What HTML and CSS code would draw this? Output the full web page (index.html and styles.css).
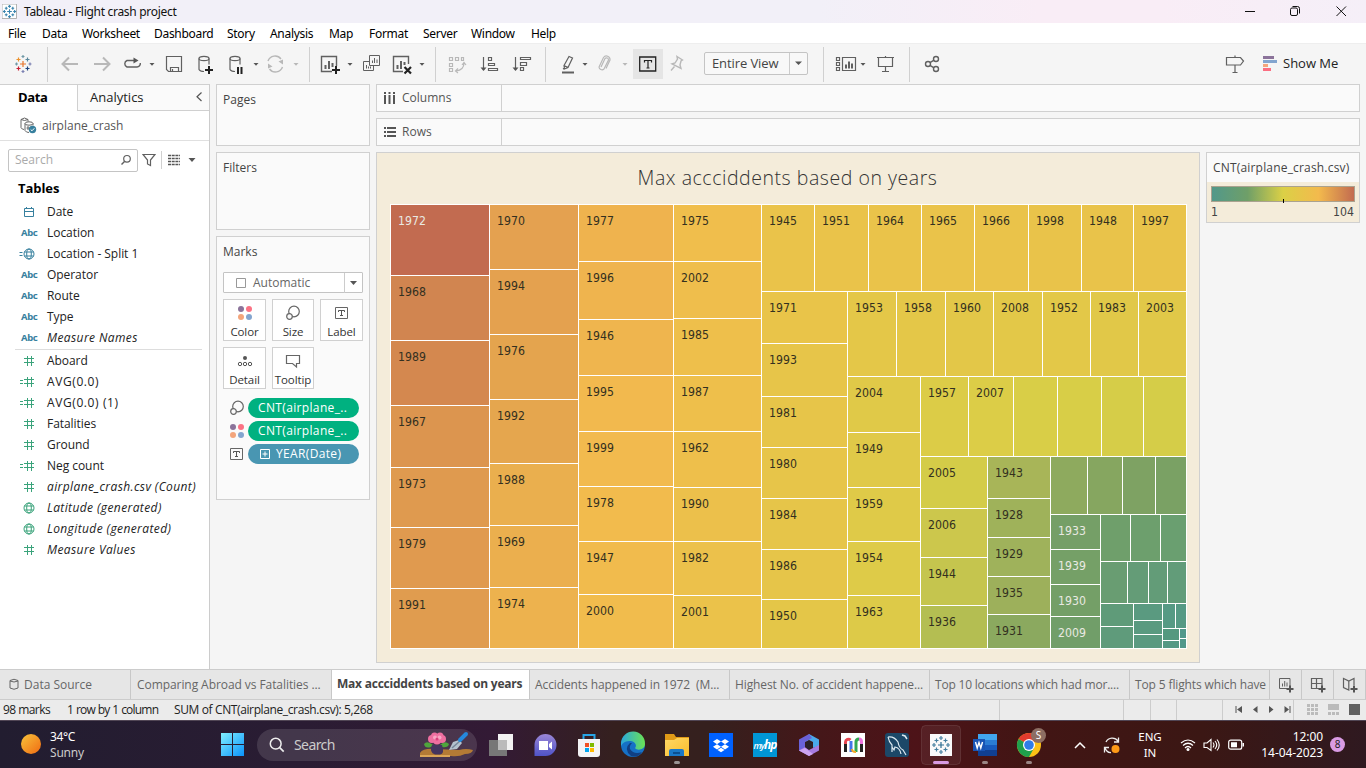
FILE: index.html
```html
<!DOCTYPE html>
<html lang="en">
<head>
<meta charset="utf-8">
<title>Tableau - Flight crash project</title>
<link rel="stylesheet" href="styles.css">
</head>
<body>
<svg width="0" height="0" class="defs">
  <defs>
    <symbol id="caret" viewBox="0 0 8 24"><path d="M1.500 11h5L4 13.800z" fill="currentColor"/></symbol>
    <symbol id="hash" viewBox="0 0 14 14"><path d="M5.500 2v10M9.500 2v10M2 4.500h10M2 8.500h10" stroke="currentColor" fill="none"/></symbol>
    <symbol id="eqhash" viewBox="0 0 18 14"><path d="M9.500 2v10M13.500 2v10M6 4.500h10M6 8.500h10M2 5.500h3M2 8.500h3" stroke="currentColor" fill="none"/></symbol>
    <symbol id="globe" viewBox="0 0 14 14"><g stroke="currentColor" fill="none"><circle cx="7" cy="7" r="5"/><ellipse cx="7" cy="7" rx="2.300" ry="5"/><path d="M2.500 5h9M2.500 9h9"/></g></symbol>
    <symbol id="dots" viewBox="0 0 16 16"><circle cx="4" cy="4" r="3" fill="#8b739a"/><circle cx="12" cy="4" r="3" fill="#fb7284"/><circle cx="4" cy="12" r="3" fill="#f3a57c"/><circle cx="12" cy="12" r="3" fill="#83a5cf"/></symbol>
    <symbol id="rings" viewBox="0 0 16 16"><g fill="none" stroke="#666"><circle cx="9" cy="6.500" r="5.300" stroke-width="1.200"/><circle cx="4.500" cy="11.500" r="2.800" fill="#fafafa" stroke-width="1.200"/></g></symbol>
    <symbol id="tbox" viewBox="0 0 16 16"><path d="M1.500 2.500h12v11h-12z" fill="none" stroke="#666"/><path d="M4.500 7V5.500h6V7M7.500 5.500v5M6 10.500h3" fill="none" stroke="#555"/></symbol>
    <linearGradient id="win" x1="0" y1="0" x2="1" y2="1"><stop offset="0" stop-color="#81f0ff"/><stop offset="1" stop-color="#0a92fb"/></linearGradient>
    <linearGradient id="sun" x1="0" y1="0" x2="1" y2="1"><stop offset="0" stop-color="#f8c43b"/><stop offset="1" stop-color="#f06a12"/></linearGradient>
    <linearGradient id="chatg" x1="0" y1="0" x2="0" y2="1"><stop offset="0" stop-color="#9a86d6"/><stop offset="1" stop-color="#4f53c8"/></linearGradient>
    <linearGradient id="edge1" x1="0" y1="0" x2="1" y2="0"><stop offset="0" stop-color="#2aa7dd"/><stop offset="1" stop-color="#6be253"/></linearGradient>
    <linearGradient id="fold" x1="0" y1="0" x2="1" y2="1"><stop offset="0" stop-color="#ffd866"/><stop offset="1" stop-color="#f9bd2c"/></linearGradient>
  </defs>
</svg>

<header class="titlebar">
  <svg class="app-icon" viewBox="0 0 16 16"><path d="M0 0h15.500v15.500H0z" fill="#fff" stroke="#aaa"/><g stroke="#3983ad" stroke-width="1.200" fill="none"><path d="M5.500 8h5M8 5.500v5M8 1v3M6.500 2.500h3M8 12v3M6.500 13.500h3M1 8h3M2.500 6.500v3M12 8h3M13.500 6.500v3M3 4.500h3M4.500 3v3M10 4.500h3M11.500 3v3M3 11.500h3M4.500 10v3M10 11.500h3M11.500 10v3"/></g></svg>
  <span class="app-title">Tableau - Flight crash project</span>
  <svg class="winctl" viewBox="0 0 110 20"><g fill="none" stroke="#111"><path d="M5 9.500h10"/><rect x="50.500" y="6" width="7" height="7.500" rx="1.500"/><path d="M52.500 4.500h5q2 0 2 2v5"/><path d="M96.500 4.500l9.500 9.500M106 4.500L96.500 14"/></g></svg>
</header>

<nav class="menubar">
  <span class="mn1">File</span><span class="mn2">Data</span><span class="mn3">Worksheet</span><span class="mn4">Dashboard</span><span class="mn5">Story</span><span class="mn6">Analysis</span><span class="mn7">Map</span><span class="mn8">Format</span><span class="mn9">Server</span><span class="mn10">Window</span><span class="mn11">Help</span>
</nav>

<div class="toolbar">
  <svg class="ic m11" viewBox="0 0 24 24"><g fill="none" stroke-width="1.200"><path d="M9 12h6M12 9v6" stroke="#e8762d"/><path d="M10.500 4.500h3M12 3v3M4 12h3M5.500 10.500v3" stroke="#7199a6"/><path d="M10.500 19.500h3M12 18v3M17.500 12h3M19 10.500v3" stroke="#7b80b2"/><path d="M5.500 7.500h4M7.500 5.500v4" stroke="#eb912c"/><path d="M14.500 7.500h4M16.500 5.500v4" stroke="#59879b"/><path d="M5.500 16.500h4M7.500 14.500v4" stroke="#c72035"/><path d="M14.500 16.500h4M16.500 14.500v4" stroke="#1f447e"/></g></svg>
  <i class="sep m12"></i>
  <svg class="ic m10 dim" viewBox="0 0 24 24"><path d="M4.500 12H20M11 5.500L4.500 12l6.500 6.500" class="s2"/></svg>
  <svg class="ic m8 dim" viewBox="0 0 24 24"><path d="M4 12h15M13 5.500l6.500 6.500-6.500 6.500" class="s2"/></svg>
  <svg class="ic m6" viewBox="0 0 24 24"><path d="M16 8.500H7a3.500 3.500 0 0 0 0 6.500h10a3.500 3.500 0 0 0 3.300-4" class="s15"/><path d="M13.500 5.500l5 3-5 3z" fill="#555"/></svg>
  <svg class="ca m4"><use href="#caret"/></svg>
  <svg class="ic m6" viewBox="0 0 24 24"><path d="M4.500 4.500h15v15H6.500l-2-2zM8.500 19.500v-4h8v4M10.500 19v-2" class="s12"/></svg>
  <svg class="ic m7" viewBox="0 0 24 24"><ellipse cx="11" cy="6.500" rx="5" ry="2.200" class="s12"/><path d="M6 6.500v11q1 2 5 2M16 6.500v6" class="s12"/><path d="M16 14v8M12 18h8" stroke="#222" stroke-width="2"/></svg>
  <svg class="ic m7" viewBox="0 0 24 24"><ellipse cx="11" cy="6.500" rx="5" ry="2.200" class="s12"/><path d="M6 6.500v11q1 2 5 2M16 6.500v6" class="s12"/><path d="M14 15v7M17.500 15v7" stroke="#222" stroke-width="2"/></svg>
  <svg class="ca m4"><use href="#caret"/></svg>
  <svg class="ic m3 dim" viewBox="0 0 24 24"><path d="M5 9a7.500 7.500 0 0 1 13-2M19.500 15a7.500 7.500 0 0 1-13 2" class="s15"/><path d="M20 7.500v5l-4.500-3zM5 16.500v-5l4.500 3z" fill="currentColor"/></svg>
  <svg class="ca m5 dim"><use href="#caret"/></svg>
  <i class="sep m9"></i>
  <svg class="ic m8" viewBox="0 0 24 24"><path d="M18.500 14V4.500h-15v15H14" class="s15"/><path d="M7.500 17v-4M11 17V9M14.500 15v-4" class="s2"/><path d="M18 14v8M14 18h8" stroke="#222" stroke-width="2"/></svg>
  <svg class="ca m4"><use href="#caret"/></svg>
  <svg class="ic m6" viewBox="0 0 24 24"><path d="M9.500 3.500h10v10h-10zM9.500 9.500h-6v9h10v-5M12.500 11V8.500M14.500 11V6M17 11V7.500M6.500 16.500V13M8.500 16.500V14.500M10.500 16.500V14.500" class="s1"/></svg>
  <svg class="ic m5" viewBox="0 0 24 24"><path d="M19.500 12V4.500h-15v15H14" class="s15"/><path d="M8.500 17v-4M12 17V9M15.500 13v-3" class="s2"/><path d="M15.500 15l6.500 6.500M22 15l-6.500 6.500" stroke="#222" stroke-width="2.200"/></svg>
  <svg class="ca m5"><use href="#caret"/></svg>
  <i class="sep m9"></i>
  <svg class="ic m9 dim" viewBox="0 0 24 24"><path d="M4.500 5.500h3v3h-3zM10.500 5.500h3v3h-3zM16.500 5.500h2v3h-2zM4.500 11.500h3v3h-3zM4.500 16.500h3v3h-3zM19 11q0 7-8 8M17 13l2-2.500 2 2.500M13 16.500L10.500 19l2.500 2" class="s12"/></svg>
  <svg class="ic m9" viewBox="0 0 24 24"><path d="M5.500 5v13M10.500 5.500h3v3h-3zM10.500 11.500h6v2h-6zM10.500 16.500h9v2h-9z" class="s12"/><path d="M2.500 15.500h6l-3 3.500z" fill="#555"/></svg>
  <svg class="ic m8" viewBox="0 0 24 24"><path d="M5.500 5v13M10.500 5.500h10v2h-10zM10.500 10.500h6v3h-6zM10.500 15.500h3v3h-3z" class="s12"/><path d="M2.500 15.500h6l-3 3.500z" fill="#555"/></svg>
  <i class="sep m11"></i>
  <svg class="ic m10" viewBox="0 0 24 24"><path d="M8 13.500L13 4.500l3.500 1.500-4.500 9.500-3.500 1.500zM8 13.500l4 2M7 17l1.500-1" class="s12"/><path d="M6 20.500h12" class="s2"/></svg>
  <svg class="ca m1"><use href="#caret"/></svg>
  <svg class="ic m4 dim" viewBox="0 0 24 24"><path d="M8 15l4-8.500a2 2 0 0 1 3.500 1.500L11 17a3 3 0 0 1-5-2l4.500-9.500A3.600 3.600 0 0 1 17 8l-4 8.500" class="s12"/></svg>
  <svg class="ca m4 dim"><use href="#caret"/></svg>
  <span class="tbtn m4"><svg class="ic" viewBox="0 0 24 24"><path d="M3.700 5h16v14h-16z" stroke="#222" stroke-width="1.300" fill="none"/><path d="M8.500 10.500V8.500h7v2M12 8.500v7M10.500 16h3" stroke="#222" stroke-width="1.200" fill="none"/></svg></span>
  <svg class="ic m2 dim" viewBox="0 0 24 24"><path d="M12 4.500l5.500 3.500-1.500 1-1 4 1 3.500-9-4.500 3-1 2.500-4zM9.500 14.500L6 18.500" class="s15"/></svg>
  <span class="select m15"><b>Entire View</b><svg class="ca2" viewBox="0 0 18 21"><path d="M.5 0v21" stroke="#ccc"/><path d="M6 8.500h7L9.500 12z" fill="#555"/></svg></span>
  <i class="sep m15"></i>
  <svg class="ic m10" viewBox="0 0 24 24"><path d="M2.500 5.500h3v3h-3zM2.500 10.500h3v3h-3zM2.500 15.500h3v3h-3zM8.500 5.500h13v13h-13z" class="s12"/><path d="M12 16.500v-4M15 16.500v-7M18 16.500v-5" class="s2"/></svg>
  <svg class="ca m1"><use href="#caret"/></svg>
  <svg class="ic m6" viewBox="0 0 24 24"><path d="M4 5.500h17M5.500 5.500v9h14v-9M12.500 4v2M12.500 15v4M9 19.500h7" class="s12"/></svg>
  <i class="sep m12"></i>
  <svg class="ic m10" viewBox="0 0 24 24"><g class="s15"><circle cx="8" cy="12" r="2.500"/><circle cx="16" cy="7" r="2.500"/><circle cx="16" cy="17" r="2.500"/><path d="M10 10.700l4-2.500M10 13.300l4 2.500"/></g></svg>
  <svg class="ic mauto" viewBox="0 0 24 24"><path d="M3.500 5.500h14l3 3.500-3 4h-14zM12 3.500v2M12 13v7M9.500 20.500h5" class="s12"/></svg>
  <span class="showme"><svg width="15" height="16" viewBox="0 0 15 16"><path d="M0 0h11v3H0z" fill="#8b739a"/><path d="M0 4h14v3H0z" fill="#83a5cf"/><path d="M0 8h5v3H0z" fill="#f3a57c"/><path d="M0 12h8v3H0z" fill="#fb6e81"/></svg><span>Show Me</span></span>
</div>

<main class="work">
  <aside class="data">
    <div class="dtabs"><b>Data</b><div><span>Analytics</span><svg width="8" height="12" viewBox="0 0 8 12"><path d="M6.500 1.500L2 5.700l4.500 4.300" fill="none" stroke="#555" stroke-width="1.200"/></svg></div></div>
    <div class="source"><svg width="17" height="17" viewBox="0 0 17 17"><g fill="none" stroke="#666"><path d="M1 2.500q3.500-3 7 0v2M1 2.500v8q1 2 3 2M1 2.500q3.500 2 7 0"/><ellipse cx="9" cy="6.500" rx="4" ry="1.700"/><path d="M5 6.500v7q1 2 4 2M13 6.500v2M8 9v4M6.500 11h3"/></g><circle cx="12.500" cy="12.500" r="3.700" fill="#37809e"/><path d="M10.700 12.500l1.300 1.300 2.300-2.500" stroke="#fff" fill="none"/></svg><span>airplane_crash</span></div>
    <div class="searchrow">
      <div class="sbox"><span>Search</span><svg width="12" height="12" viewBox="0 0 12 12"><circle cx="7" cy="4.800" r="3.300" class="s12"/><path d="M4.500 7.500L1.500 10.500" class="s15"/></svg></div>
      <svg width="14" height="14" viewBox="0 0 14 14"><path d="M1 1.500h12L8.500 7v5.500l-3-1.500V7z" class="s12"/></svg>
      <i></i>
      <svg width="14" height="12" viewBox="0 0 14 12"><path d="M1 1.500h12M1 4.500h12M1 7.500h12M1 10.500h12" stroke="#555" stroke-width="1.300" stroke-dasharray="3 .7"/></svg>
      <svg width="8" height="8" viewBox="0 0 8 8"><path d="M.5 2h7L4 6z" fill="#555"/></svg>
    </div>
    <h2>Tables</h2>
    <ul class="fields dims">
      <li><svg class="fi" viewBox="0 0 14 14"><path d="M2.500 3.500h9v8h-9zM2.500 6.500h9M4.500 2v2M9.500 2v2" stroke="currentColor" fill="none"/></svg><span>Date</span></li>
      <li><em>Abc</em><span>Location</span></li>
      <li><svg class="fe" viewBox="0 0 18 14"><g stroke="currentColor" fill="none"><circle cx="11" cy="7" r="5"/><ellipse cx="11" cy="7" rx="2.300" ry="5"/><path d="M6.500 5h9M6.500 9h9M1.500 5.500h3M1.500 8.500h3"/></g></svg><span>Location - Split 1</span></li>
      <li><em>Abc</em><span>Operator</span></li>
      <li><em>Abc</em><span>Route</span></li>
      <li><em>Abc</em><span>Type</span></li>
      <li class="it"><em>Abc</em><span>Measure Names</span></li>
    </ul>
    <ul class="fields meas">
      <li><svg class="fi"><use href="#hash"/></svg><span>Aboard</span></li>
      <li class="wide"><svg class="fe"><use href="#eqhash"/></svg><span>AVG(0.0)</span></li>
      <li class="wide"><svg class="fe"><use href="#eqhash"/></svg><span>AVG(0.0) (1)</span></li>
      <li><svg class="fi"><use href="#hash"/></svg><span>Fatalities</span></li>
      <li><svg class="fi"><use href="#hash"/></svg><span>Ground</span></li>
      <li><svg class="fe"><use href="#eqhash"/></svg><span>Neg count</span></li>
      <li class="it"><svg class="fi"><use href="#hash"/></svg><span>airplane_crash.csv (Count)</span></li>
      <li class="it"><svg class="fi"><use href="#globe"/></svg><span>Latitude (generated)</span></li>
      <li class="it"><svg class="fi"><use href="#globe"/></svg><span>Longitude (generated)</span></li>
      <li class="it"><svg class="fi"><use href="#hash"/></svg><span>Measure Values</span></li>
    </ul>
  </aside>

  <section class="cards">
    <div class="card pages">Pages</div>
    <div class="card filters">Filters</div>
    <div class="card marks">Marks
      <div class="mtype"><svg width="12" height="12" viewBox="0 0 12 12"><path d="M1.500 1.500h9v9h-9z" fill="#fff" stroke="#999"/></svg><span>Automatic</span><svg class="mc" viewBox="0 0 18 20"><path d="M.5 0v20" stroke="#ccc"/><path d="M6 8h7l-3.500 4z" fill="#555"/></svg></div>
      <div class="mgrid">
        <div><svg><use href="#dots"/></svg><span>Color</span></div>
        <div><svg><use href="#rings"/></svg><span>Size</span></div>
        <div><svg><use href="#tbox"/></svg><span>Label</span></div>
        <div><svg viewBox="0 0 16 16"><circle cx="8" cy="5" r="2" fill="#555"/><g fill="none" stroke="#555"><circle cx="3" cy="11" r="1.700"/><circle cx="8" cy="11" r="1.700"/><circle cx="13" cy="11" r="1.700"/></g></svg><span>Detail</span></div>
        <div><svg viewBox="0 0 16 16"><path d="M1.500 2.500h13v8h-3v3.500l-4-3.500h-6z" fill="none" stroke="#666" stroke-width="1.200"/></svg><span>Tooltip</span></div>
      </div>
      <div class="pill"><svg><use href="#rings"/></svg><span>CNT(airplane_..</span></div>
      <div class="pill"><svg><use href="#dots"/></svg><span>CNT(airplane_..</span></div>
      <div class="pill blue"><svg><use href="#tbox"/></svg><span><svg class="plus" viewBox="0 0 10 10"><path d="M.5.500h9v9h-9zM2.500 5h5M5 2.500v5" fill="none" stroke="#fff"/></svg>YEAR(Date)</span></div>
    </div>
  </section>

  <section class="canvas">
    <div class="shelf"><div><svg width="12" height="12" viewBox="0 0 12 12"><path d="M1 0v2M5.500 0v2M10 0v2M1 3v9M5.500 3v9M10 3v9" stroke="#555" stroke-width="2"/></svg><span>Columns</span></div></div>
    <div class="shelf"><div><svg width="12" height="12" viewBox="0 0 12 12"><path d="M0 2h2M0 6h2M0 10h2M3 2h9M3 6h9M3 10h9" stroke="#555" stroke-width="2"/></svg><span>Rows</span></div></div>
    <div class="viewrow">
      <div class="view">
        <h1>Max accciddents based on years</h1>
        <div class="treemap" id="treemap"></div>
      </div>
      <div class="legend">
        <div class="lt">CNT(airplane_crash.csv)</div>
        <div class="lb"><div class="ramp"><i></i></div><div class="range"><span>1</span><span>104</span></div></div>
      </div>
    </div>
  </section>
</main>

<div class="tabs">
  <span class="t0"><svg width="10" height="13" viewBox="0 0 10 13"><path d="M1 2.500q4-2.500 8 0v7.500q-4 2.500-8 0zM1 3q4 2 8 0" fill="none" stroke="#666"/></svg>Data Source</span>
  <span class="t1">Comparing Abroad vs Fatalities ...</span>
  <span class="t2">Max accciddents based on years</span>
  <span class="t3">Accidents happened in 1972&nbsp; (M...</span>
  <span class="t4">Highest No. of accident happene...</span>
  <span class="t5">Top 10 locations which had mor....</span>
  <span class="t6">Top 5 flights which have</span>
  <span class="ti"><svg viewBox="0 0 16 16"><path d="M12 9V1.500H1.500v10H9M4.500 9.500V6.500M6.700 9.500V4M9 9.500V5.500" class="s1"/><path d="M12 8.500v7M8.500 12h7" stroke="#555" stroke-width="2"/></svg></span>
  <span class="ti"><svg viewBox="0 0 16 16"><path d="M12 9V1.500H1.500v10H9M1.500 6.500H12M6.500 1.500v10" class="s12"/><path d="M12 8.500v7M8.500 12h7" stroke="#555" stroke-width="2"/></svg></span>
  <span class="ti"><svg viewBox="0 0 16 16"><path d="M12 8V1.500L6.800 4 1.500 1.500v9L6.800 13V4" class="s12"/><path d="M12 8.500v7M8.500 12h7" stroke="#555" stroke-width="2"/></svg></span>
</div>

<footer class="status">
  <span class="st1">98 marks</span><span class="st2">1 row by 1 column</span><span class="st3">SUM of CNT(airplane_crash.csv): 5,268</span>
  <div class="sgrid"><i></i><i></i><i></i><i></i>
    <b><svg width="66" height="20" viewBox="0 0 66 20"><g fill="#555"><path d="M4 6h1v7H4zM10.500 6v7L5.500 9.500zM26 6v7l-4.500-3.500zM37.500 6v7l4.500-3.500zM53 6v7l4.500-3.500zM58 6h1v7h-1z" transform="translate(4.500 0)"/></g></svg></b>
    <b><svg width="68" height="20" viewBox="0 0 68 20"><g transform="translate(1 0)"><path d="M8 5.500h11M8 9.500h11M8 13.500h11" stroke="#bbb" stroke-width="3" stroke-dasharray="3 1"/><path d="M29 4h11v6H29zM29 12h3v3h-3zM33 12h3v3h-3zM37 12h3v3h-3z" fill="#bbb"/><path d="M50 4h11v11H50z" fill="#606060"/></g></svg></b>
  </div>
</footer>

<div class="taskbar">
  <svg class="sun" viewBox="0 0 20 20"><circle cx="10" cy="10" r="10" fill="url(#sun)"/></svg>
  <div class="weather"><span>34°C</span><span>Sunny</span></div>
  <svg class="start" viewBox="0 0 24 24"><path d="M0 0h11v11H0zM12 0h11v11H12zM0 12h11v11H0zM12 12h11v11H12z" fill="url(#win)"/></svg>
  <div class="search">
    <svg width="16" height="16" viewBox="0 0 16 16"><circle cx="6.700" cy="6.700" r="5.400" fill="none" stroke="#eee" stroke-width="1.500"/><path d="M10.700 10.700l4 4" stroke="#eee" stroke-width="1.700"/></svg>
    <span>Search</span>
    <svg class="flower" viewBox="0 0 54 28"><path d="M1 22q3-5 15-4l24 1q7-2 14 0-1 4-8 4-6 3-14 2l-12 1H1z" fill="#b37a35"/><path d="M1 24h30v2H1z" fill="#dca657"/><path d="M5 13q3-4 9 1l-2 2Q6 18 5 13zM30 13q-4-4-9 1l2 2q6 1 7-3z" fill="#4fa53c"/><path d="M13 14h10q3 9-2 9.500h-5Q10 22 13 14z" fill="#45355e"/><g fill="#ef6fa0"><circle cx="13" cy="8" r="4"/><circle cx="23" cy="8" r="4"/><circle cx="15.500" cy="5" r="3.500"/><circle cx="21" cy="5" r="3.500"/><circle cx="18" cy="9.500" r="4"/></g><g fill="#f9a5c3"><circle cx="16" cy="6.500" r="2"/><circle cx="20.500" cy="6.500" r="2"/></g><circle cx="18" cy="8" r="1.500" fill="#d8407c"/><path d="M40 9l-6 2-4 8 8-1 5-6z" fill="#b5c1ce"/><path d="M33 17l8-7" stroke="#76869a" stroke-width="1.500"/><path d="M41 9l6-6" stroke="#2589dc" stroke-width="4" stroke-linecap="round"/></svg>
  </div>
  <div class="apps">
    <svg viewBox="0 0 24 24"><path d="M9 1h15v16H9z" fill="#f2f2f2"/><path d="M0 7h18v16H0z" fill="#777"/><path d="M9 7h9v10H9z" fill="#bbb"/></svg>
    <svg viewBox="0 0 24 24"><path d="M1.500 23V12a11 11 0 1 1 11 11z" fill="url(#chatg)"/><path d="M6 8h9v9H6zM16 11l3-2.500v8L16 14z" fill="#fff"/></svg>
    <svg viewBox="0 0 24 24"><path d="M6.500 6V2h11v4" fill="none" stroke="#27a5e6" stroke-width="2"/><path d="M1 6h22v15q0 3-3 3H4q-3 0-3-3z" fill="#f3f3f5"/><path d="M8 10h4v4H8z" fill="#f05125"/><path d="M13 10h4v4h-4z" fill="#7fba00"/><path d="M8 15h4v4H8z" fill="#00a4ef"/><path d="M13 15h4v4h-4z" fill="#ffb900"/></svg>
    <svg viewBox="0 0 24 24"><circle cx="12" cy="12" r="12" fill="#1671c6"/><path d="M0 10a12 12 0 0 1 24 1c0 6-8 7-10 4 2-2 1-6-4-7-5 0-8 1-10 5z" fill="url(#edge1)"/><path d="M9 10q-7 6 1 13 7 2 11-4-8 3-12-3-1-3 2-6z" fill="#103f83"/></svg>
    <svg viewBox="0 0 24 24"><path d="M0 1h9l2 3h13v19H0z" fill="#e09a17"/><path d="M0 7h9l3-2h12v18H0z" fill="url(#fold)"/><path d="M4 23v-5q0-2 2-2h11q2 0 2 2v5z" fill="#1a78c8"/><path d="M8 19h7v2H8z" fill="#0b4f91"/><rect x="9" y="28" width="6" height="3" rx="1.500" fill="#9a9494"/></svg>
    <svg viewBox="0 0 24 24"><path d="M0 0h24v24H0z" fill="#0061fe"/><path d="M8 6l4 2.600L8 11.200 4 8.600zM16 6l4 2.600-4 2.600-4-2.600zM8 11.200l4 2.600-4 2.600-4-2.600zM16 11.200l4 2.600-4 2.600-4-2.600zM12 14.800l3.500 2.200-3.500 2.200L8.500 17z" fill="#fff"/></svg>
    <div class="hp"><small>my</small>hp</div>
    <svg viewBox="0 0 24 24"><path d="M12 1l10 5.500V13l-6 2V9l-4-2-4 2z" fill="#4aa9ea"/><path d="M12 1L2 6.500v11L8 20V9l7-4z" fill="#6a62d8"/><path d="M22 12v5.500L12 23 2 17.500 8 14l4 3 4-2z" fill="#a77be0"/><path d="M2 17.500L12 23l4-2-8-6z" fill="#cda4f0"/><path d="M8.500 9.500L12 7.500l3.500 2v4.500L12 16.500l-3.500-2z" fill="#2a2128"/></svg>
    <svg viewBox="0 0 24 24"><path d="M0 0h24v24H0z" fill="#fff"/><g fill="none" stroke-width="3"><path d="M4.500 12V9a3 3 0 0 1 5-2" stroke="#e74650"/><path d="M4.500 19v-8" stroke="#222"/><path d="M10 19V8" stroke="#4274e8"/><path d="M15 19V9q0-3 3-3" stroke="#34a853"/><path d="M18 6q2.500 0 2.500 3v3" stroke="#ec72dd"/><path d="M20.500 11v8" stroke="#222"/><path d="M15 19q-4 0-4-3" stroke="#f5a623" stroke-width="2"/></g></svg>
    <svg viewBox="0 0 24 24"><rect width="24" height="24" rx="3" fill="#1c4868"/><path d="M3 4q6-1 10 5 1 6 5 8l3 5M3 4q1 5 4 8v7M7 14l2 3 1-3q5 1 6 7" fill="none" stroke="#dceaf1" stroke-width="1.200"/><path d="M17 2l3 1 2 3" fill="none" stroke="#dceaf1" stroke-width="1.500"/></svg>
    <svg viewBox="0 0 24 24"><rect x="-7.500" y="-7.500" width="39" height="39" rx="4" fill="#fff" fill-opacity=".06" stroke="#fff" stroke-opacity=".1"/><path d="M1 1h22v22H1z" fill="#fafafa"/><g stroke="#447f9f" stroke-width="1.200" fill="none"><path d="M9 12h6M12 9v6" stroke="#2e6e92"/><path d="M12 3v4M10 5h4M12 17v4M10 19h4M5 10v4M3 12h4M19 10v4M17 12h4M7.500 5.500v4M5.500 7.500h4M16.500 5.500v4M14.500 7.500h4M7.500 14.500v4M5.500 16.500h4M16.500 14.500v4M14.500 16.500h4"/></g><rect x="4" y="28" width="16" height="3" rx="1.500" fill="#d99be3"/></svg>
    <svg viewBox="0 0 24 24"><path d="M5 1h19v6H5z" fill="#41a5ee"/><path d="M5 7h19v5H5z" fill="#2b7cd3"/><path d="M5 12h19v5H5z" fill="#185abd"/><path d="M5 17h19v6H5z" fill="#103f91"/><path d="M0 6h12v12H0z" fill="#1854b4"/><path d="M2.500 9l1.700 6L6 9.500 7.800 15l1.700-6" fill="none" stroke="#fff" stroke-width="1.400"/><rect x="9" y="28" width="6" height="3" rx="1.500" fill="#9a8584"/></svg>
    <div class="chrome"><svg viewBox="0 0 24 24"><circle cx="12" cy="12" r="12" fill="#fbc116"/><path d="M12 12L1.600 6A12 12 0 0 1 22.400 6z" fill="#e33b2e"/><path d="M12 12L1.600 6A12 12 0 0 0 12 24l5-9z" fill="#1fa04c"/><circle cx="12" cy="12" r="6" fill="#fff"/><circle cx="12" cy="12" r="4.800" fill="#2f7de8"/><rect x="9" y="28" width="6" height="3" rx="1.500" fill="#9a8584"/></svg><i>S</i></div>
  </div>
  <div class="tray">
    <svg class="chev" viewBox="0 0 12 8"><path d="M1 7l5-5 5 5" fill="none" stroke="#fff" stroke-width="1.500"/></svg>
    <svg class="sync" viewBox="0 0 18 18"><path d="M3 6a7 7 0 0 1 12-1M15.500 1.500V6H11M1.500 16.500V11.500H6M2 12q2 5 6 4.500" fill="none" stroke="#eee" stroke-width="1.300"/><circle cx="12.500" cy="13" r="4" fill="#ff9a17"/></svg>
    <div class="lang"><span>ENG</span><span>IN</span></div>
    <svg class="wifi" viewBox="0 0 16 14"><g fill="none" stroke="#fff" stroke-width="1.200"><path d="M1 5q7-6 14 0M3 7.500q5-4.500 10 0M5 10q3-3 6 0"/></g><circle cx="8" cy="11.500" r="1.500" fill="#fff"/></svg>
    <svg class="vol" viewBox="0 0 17 14"><path d="M1 5h3l4-3.500v11L4 9.500H1zM10 4.500q2 2.500 0 5M12 3q3.500 4 0 8M14 1.500q4.500 5.500 0 11" fill="none" stroke="#fff" stroke-width="1.100"/></svg>
    <svg class="bat" viewBox="0 0 17 12"><rect x=".7" y="1.200" width="13" height="9" rx="2" fill="none" stroke="#fff" stroke-width="1.200"/><path d="M3 3.200h6v5H3zM14.500 4H16v3.500h-1.500z" fill="#fff"/></svg>
    <div class="clock"><span>12:00</span><span>14-04-2023</span></div>
    <div class="badge">8</div>
  </div>
</div>
<script src="treemap.js"></script>
</body>
</html>
```
FILE: treemap.js
```js
// Each split lists its divider positions between a start and an end; leaves are "label#colour".
const row = (from, to, cuts, kids) => ({ dir: 'row', from, to, cuts, kids });
const col = (from, to, cuts, kids) => ({ dir: 'col', from, to, cuts, kids });

const corner = col(604, 648, [628], [
  row(1163, 1186, [1175], ['#569a84', '#569a84']),
  row(1163, 1186, [1179], [
    col(629, 648, [640], ['#54997f', '#549983']),
    col(629, 648, [638], ['#52988a', '#52988a'])
  ])
]);
const small = col(515, 648, [561, 603], [
  row(1101, 1186, [1130, 1160], ['#6f9f6b', '#6d9f6d', '#6a9f70']),
  row(1101, 1186, [1127, 1148, 1167], ['#699d72', '#649c77', '#639c78', '#629c79']),
  row(1101, 1186, [1133, 1162], [
    col(604, 648, [626], ['#5f9b79', '#5f9b7b']),
    col(604, 648, [620, 634], ['#5a9a80', '#5a9a80', '#5a9a80']),
    corner
  ])
]);
const green = col(457, 648, [514], [
  row(1051, 1186, [1087, 1122, 1155], ['#8eaa5e', '#86a660', '#7ea263', '#7aa164']),
  row(1051, 1186, [1100], [
    col(515, 648, [549, 584, 616], ['1933!#759f67', '1939!#75a067', '1930!#749f67', '2009!#719e69']),
    small
  ])
]);
const low = row(921, 1186, [987, 1050], [
  col(457, 648, [508, 557, 605], ['2005#d4cc48', '2006#ccc74c', '1944#c5c54e', '1936#b4be52']),
  col(457, 648, [498, 537, 576, 614], ['1943#a8b558', '1928#9fb25a', '1929#9fb25b', '1935#9db05b', '1931#8ba95f']),
  green
]);
const mid = row(848, 1186, [920], [
  col(377, 648, [432, 487, 541, 595], ['2004#e0c948', '1949#e0c948', '1959#dfca48', '1954#decb48', '1963#ddca48']),
  col(377, 648, [456], [
    row(921, 1186, [968, 1013, 1057, 1101, 1143], ['1957#dccc47', '2007#dccd47', '#d9ce47', '#d8ce47', '#d6cd48', '#d5cd48']),
    low
  ])
]);
const right = col(205, 648, [291], [
  row(762, 1186, [814, 868, 921, 974, 1028, 1081, 1133], ['1945#eac34a', '1951#eac34a', '1964#eac34a', '1965#eac34a', '1966#eac34a', '1998#e9c34a', '1948#e9c34a', '1997#e9c34a']),
  row(762, 1186, [847], [
    col(292, 648, [343, 396, 447, 498, 549, 599], ['1971#e9c449', '1993#e7c549', '1981#e7c549', '1980#e7c549', '1984#e6c549', '1986#e6c549', '1950#e4c648']),
    col(292, 648, [376], [
      row(848, 1186, [896, 945, 993, 1042, 1090, 1138], ['1953#e4c748', '1958#e4c748', '1960#e3c748', '2008#e3c848', '1952#e3c848', '1983#e1c848', '2003#e1c848']),
      mid
    ])
  ])
]);
const tree = row(391, 1186, [489, 578, 673, 761], [
  col(205, 648, [275, 340, 405, 467, 527, 588], ['1972!#c26b50', '1968#d18550', '1989#d4884f', '1967#dc954f', '1973#df9a4f', '1979#e09a4f', '1991#e09c4f']),
  col(205, 648, [269, 334, 399, 463, 525, 587], ['1970#e4a150', '1994#e4a14f', '1976#e4a44e', '1992#e5a64e', '1988#eaaf4e', '1969#ebaf4e', '1974#edb24e']),
  col(205, 648, [261, 319, 375, 431, 486, 541, 594], ['1977#efb34e', '1996#efb44e', '1946#efb54e', '1995#f2b94e', '1999#f2ba4e', '1978#f2bb4d', '1947#f1bb4d', '2000#f1bc4d']),
  col(205, 648, [261, 318, 375, 431, 487, 541, 595], ['1975#f0be4c', '2002#efbe4c', '1985#eebf4b', '1987#eebf4b', '1962#eebf4b', '1990#ecc04b', '1982#ecc14b', '2001#ebc24a']),
  right
]);

function build(node) {
  const el = document.createElement('div');
  if (typeof node === 'string') {
    const [label, colour] = node.split('#');
    el.className = label.endsWith('!') ? 'tile light' : 'tile';
    el.textContent = label.replace('!', '');
    el.style.backgroundColor = '#' + colour;
    return el;
  }
  el.className = 'split ' + node.dir;
  let start = node.from;
  node.kids.forEach((kid, i) => {
    const end = i < node.cuts.length ? node.cuts[i] : node.to;
    const child = build(kid);
    child.style.flexBasis = (end - start) + 'px';
    el.append(child);
    start = end + 1;
  });
  return el;
}
document.getElementById('treemap').append(build(tree));
```
FILE: styles.css
```css
*{box-sizing:border-box}
body{margin:0;width:1366px;height:768px;overflow:hidden;background:#f5f5f5;font:12px/16px "Open Sans","Noto Sans",sans-serif;color:#333}
svg{display:block;flex:none}
.defs{position:absolute}
h1,h2,ul{margin:0;padding:0;font-weight:400}
li{list-style:none}
.s1,.s12,.s15,.s2{fill:none;stroke:#606060}
.s12{stroke-width:1.2}.s15{stroke-width:1.4}.s2{stroke-width:2}
.dim .s15,.dim .s12,.dim .s2{stroke:#b8b8b8}

.titlebar,.menubar,.taskbar{font-family:"Noto Sans","Open Sans",sans-serif}
.titlebar{height:23px;display:flex;align-items:center;background:linear-gradient(90deg,#f2f0f8 0,#f2f0f8 60%,#f9edf6 76%,#f9edf6 85%,#f5eff8 100%)}
.app-icon{width:15px;height:15px;margin-left:2px}
.app-title{color:#111;margin-left:7px;letter-spacing:-.3px}
.winctl{width:110px;height:20px;margin:0 16px 0 auto}

.menubar{height:20px;background:#fff;display:flex;align-items:center;color:#000;padding:2px 0 0 8px;font-size:12px}
.menubar span{letter-spacing:-.3px;white-space:nowrap}
.mn1{width:34px}.mn2{width:40px}.mn3{width:72px}.mn4{width:73px}.mn5{width:43px}.mn6{width:59px}.mn7{width:40px}.mn8{width:54px}.mn9{width:48px}.mn10{width:60px}.mn11{width:40px}

.toolbar{height:41px;border-top:1px solid #eee;padding-top:8px;display:flex;align-items:flex-start;color:#555}
.ic{width:24px;height:24px}
.ca{width:8px;height:24px}
.dim{color:#b8b8b8}
.sep{width:1px;height:35px;margin-top:-5px;background:#d0d0d0}
.m1{margin-left:1px}.m2{margin-left:2px}.m3{margin-left:3px}.m4{margin-left:4px}.m5{margin-left:5px}.m6{margin-left:6px}.m7{margin-left:7px}.m8{margin-left:8px}.m9{margin-left:9px}.m10{margin-left:10px}.m11{margin-left:11px}.m12{margin-left:12px}.m15{margin-left:15px}
.mauto{margin-left:auto}
.tbtn{width:30px;height:30px;margin-top:-3px;padding:3px;background:#e5e5e5}
.select{width:104px;height:23px;border:1px solid #c4c4c4;border-radius:2px;display:flex;justify-content:space-between;background:#f8f8f8}
.select b{font-weight:400;font-size:13px;line-height:21px;padding-left:7px;color:#444;letter-spacing:-.1px}
.ca2{width:18px;height:21px}
.showme{width:103px;margin-left:16px;display:flex;gap:5px;padding-top:4px;color:#222;font-size:13px;line-height:15px}

.work{height:585px;display:flex}
.data{width:210px;background:#fff;border-right:1px solid #ccc;border-top:1px solid #d0d0d0}
.dtabs{height:26px;display:flex}
.dtabs b{width:77px;padding-left:18px;font-size:13px;line-height:25px;color:#000;letter-spacing:-.4px}
.dtabs div{flex:1;border:1px solid #d0d0d0;border-width:0 0 1px 1px;background:#fafafa;display:flex;justify-content:space-between;align-items:center;padding:0 6px 2px 12px;font-size:13px;color:#222}
.source{height:30px;border-bottom:1px solid #e0e0e0;display:flex;align-items:center;padding-left:20px;gap:5px;color:#555}
.searchrow{display:flex;height:24px;margin:7px 0 0 8px;align-items:center}
.sbox{width:130px;height:23px;border:1px solid #c4c4c4;border-radius:2px;display:flex;align-items:center;justify-content:space-between;padding:0 5px 0 6px;color:#aaa;margin-right:4px}
.searchrow i{width:1px;height:18px;background:#d0d0d0;margin:0 5px}
.searchrow i+svg+svg{margin-left:7px}
h2{font-size:13px;font-weight:700;color:#000;padding-left:18px;margin-top:7px;line-height:18px;letter-spacing:-.05px}
.fields li{display:flex;height:21px;align-items:center;color:#222}
.dims{margin-top:4px;color:#37809e}
.meas{margin:1px 7px 0 15px;border-top:1px solid #ddd}
.fields svg,.fields em{width:14px;height:14px;margin-left:22px;color:#37809e;flex:none}
.fields .fe{width:18px;margin-left:18px}
.fields em{font:700 9.500px/14px "Noto Sans",sans-serif;width:16px;margin:0 0 0 21px;letter-spacing:-.4px}
.fields span{margin-left:11px;white-space:nowrap;letter-spacing:-.05px}
.fields em+span{margin-left:10px}
.meas svg{color:#3aa37b;margin-left:7px}
.meas .fe{margin-left:3px}
.fields .it span{font-style:italic;letter-spacing:.4px}
.fields .wide span{letter-spacing:.6px}

.cards{width:154px;margin-left:6px}
.card{border:1px solid #d0d0d0;background:#fafafa;padding:7px 6px;margin-bottom:6px;color:#444}
.pages{height:62px}.filters{height:78px}.marks{height:264px}
.mtype{height:21px;width:140px;border:1px solid #c4c4c4;border-radius:1px;margin-top:12px;display:flex;align-items:center;background:#fff;padding-left:11px;color:#666}
.mtype span{margin-left:6px}
.mc{width:18px;height:20px;margin-left:auto}
.mgrid{display:grid;grid-template-columns:43px 42px 43px;grid-auto-rows:42px;gap:6px;margin-top:6px}
.mgrid div{border:1px solid #d0d0d0;background:#fff;display:flex;flex-direction:column;align-items:center;padding-top:5px;font-size:11.500px;color:#333}
.mgrid svg{width:16px;height:16px}
.mgrid span{line-height:15px;margin-top:3px;letter-spacing:-.1px}
.pill{display:flex;align-items:center;margin-left:6px;height:20px;margin-bottom:3px;gap:3px}
.mgrid+.pill{margin-top:9px}
.pill>svg{width:16px;height:16px}
.pill>span{width:111px;height:20px;border-radius:10px;background:#00b180;color:#fff;padding-left:10px;line-height:20px;display:flex;align-items:center;gap:6px;letter-spacing:.35px}
.pill.blue>span{background:#4996b2;padding-left:12px}
.plus{width:10px;height:10px}

.canvas{width:984px;margin-left:6px}
.shelf{height:28px;border:1px solid #d0d0d0;background:#fafafa;margin-bottom:6px}
.shelf div{width:125px;height:26px;border-right:1px solid #d0d0d0;display:flex;align-items:center;padding-left:7px;gap:6px;color:#555}
.viewrow{display:flex;gap:6px;align-items:flex-start}
.view{width:824px;height:511px;border:1px solid #d0d0d0;background:#f4ecda;padding:13px 0 0 13px}
h1{font:300 19.500px/24px "Open Sans","Noto Sans",sans-serif;letter-spacing:.54px;color:#333;text-align:center;width:795px;height:38px}
.treemap{width:797px;height:445px;background:#fff;padding:1px;display:flex}
.split{display:flex;gap:1px;flex:0 0 auto;min-width:0;min-height:0}
.treemap>.split{width:795px}
.row{flex-direction:row}.col{flex-direction:column}
.tile{flex:0 0 auto;padding:8px 0 0 7px;font:12.200px/16px "DejaVu Sans Condensed","DejaVu Sans",sans-serif;color:#33301f;overflow:hidden;min-width:0;min-height:0}
.tile:empty{padding:0}
.light{color:#e9e9e2}
.legend{width:154px;height:71px;border:1px solid #d0d0d0;background:#fafafa}
.lt{height:29px;padding-left:6px;line-height:30px;white-space:nowrap;color:#444;letter-spacing:.18px}
.lb{height:40px;background:#f4ecda;padding:4px;color:#444}
.ramp{height:16px;border:1px solid #aaa28f;background:linear-gradient(90deg,#52988a,#6f9f68 25%,#dbd046 50%,#f3ba4d 75%,#c26b50);display:flex;justify-content:center;align-items:flex-end}
.ramp i{width:1px;height:4px;margin-bottom:-2px;background:#000}
.range{display:flex;justify-content:space-between;padding:2px 1px 0 0;font:12.200px/16px "DejaVu Sans Condensed",sans-serif}

.tabs{height:31px;border:1px solid #ccc;border-width:1px 0;background:#e6e6e6;display:flex;color:#666}
.tabs span{border-right:1px solid #c8c8c8;line-height:30px;white-space:nowrap;overflow:hidden;padding-left:5px;flex:none;letter-spacing:-.1px}
.tabs .t0{width:131px;display:flex;align-items:center;gap:5px;padding-left:9px;letter-spacing:0}
.tabs .t1{width:201px;padding-left:6px;letter-spacing:-.07px}
.tabs .t2{width:198px;background:#fff;color:#444;font-weight:700;letter-spacing:-.23px;line-height:28px}
.t3,.t4,.t5{width:200px}
.tabs .t5{letter-spacing:-.2px}
.tabs .t6{width:140px;letter-spacing:-.13px}
.tabs .ti{width:32px;display:flex;align-items:center;padding-left:8px}
.ti svg{width:16px;height:16px}
.status{height:20px;background:#ebebeb;display:flex;align-items:center;color:#222;white-space:nowrap}
.st1{width:64px;padding-left:3px;letter-spacing:-.55px}.st2{width:110px;padding-left:3px;letter-spacing:-.8px;word-spacing:.5px}.st3{letter-spacing:-.38px}
.sgrid{margin-left:auto;display:flex;width:367px;height:20px;border-left:1px solid #ccc}
.sgrid i{border-right:1px solid #ccc;width:27px}
.sgrid i:first-child{width:127px}
.sgrid i:nth-child(4){width:47px}
.sgrid b{padding-left:4px;height:20px}
.sgrid b+b{border-left:1px solid #ccc}

.taskbar{height:48px;border-top:1px solid #514655;display:flex;align-items:center;background:linear-gradient(90deg,#221d30 0,#2a1c33 22%,#331a35 36%,#35201f 45%,#35201e 52%,#451719 60%,#4d1318 67%,#421514 75%,#3b1714 88%,#2f1920 100%);color:#fff;font-size:12px}
.sun{width:20px;height:20px;margin:-2px 0 0 21px}
.weather{width:180px;padding-left:9px;display:flex;flex-direction:column;letter-spacing:-.4px;line-height:16px}
.weather span+span{color:#ccc;letter-spacing:-.2px}
.start{width:24px;height:24px}
.search{width:220px;height:32px;border-radius:16px;background:rgba(255,255,255,.12);margin-left:12px;display:flex;align-items:center;padding-left:12px;color:#ccc;font-size:14px}
.search span{margin-left:9px;letter-spacing:-.6px}
.flower{width:54px;height:28px;margin:0 4px 0 auto}
.apps{display:flex;gap:20px;margin-left:12px}
.apps>*{width:24px;height:24px;flex:none;position:relative}
.apps svg{width:24px;height:24px;overflow:visible}
.hp{background:#0096d6;font:italic 700 12px/24px "Open Sans",sans-serif;letter-spacing:-1px;text-align:center;white-space:nowrap}
.hp small{font-size:9px;font-weight:600}
.chrome i{position:absolute;left:14px;top:-5px;width:15px;height:15px;border-radius:8px;background:#8d6e63;font:10px/15px "Noto Sans",sans-serif;text-align:center}
.tray{display:flex;align-items:center;margin-left:auto;width:292px}
.chev{width:12px;height:8px}
.sync{width:18px;height:18px;margin-left:17px}
.lang{width:38px;margin-left:10px;display:flex;flex-direction:column;align-items:center;line-height:16px;font-size:11.500px}
.wifi{width:16px;height:14px;margin-left:11px}
.vol{width:17px;height:14px;margin-left:7px}
.bat{width:17px;height:12px;margin-left:8px}
.clock{width:78px;display:flex;flex-direction:column;align-items:flex-end;line-height:16px;letter-spacing:-.1px;font-size:12px}
.badge{width:15px;height:15px;border-radius:8px;background:#d99be3;color:#222;font-size:10px;line-height:15px;text-align:center;margin-left:7px}
```
